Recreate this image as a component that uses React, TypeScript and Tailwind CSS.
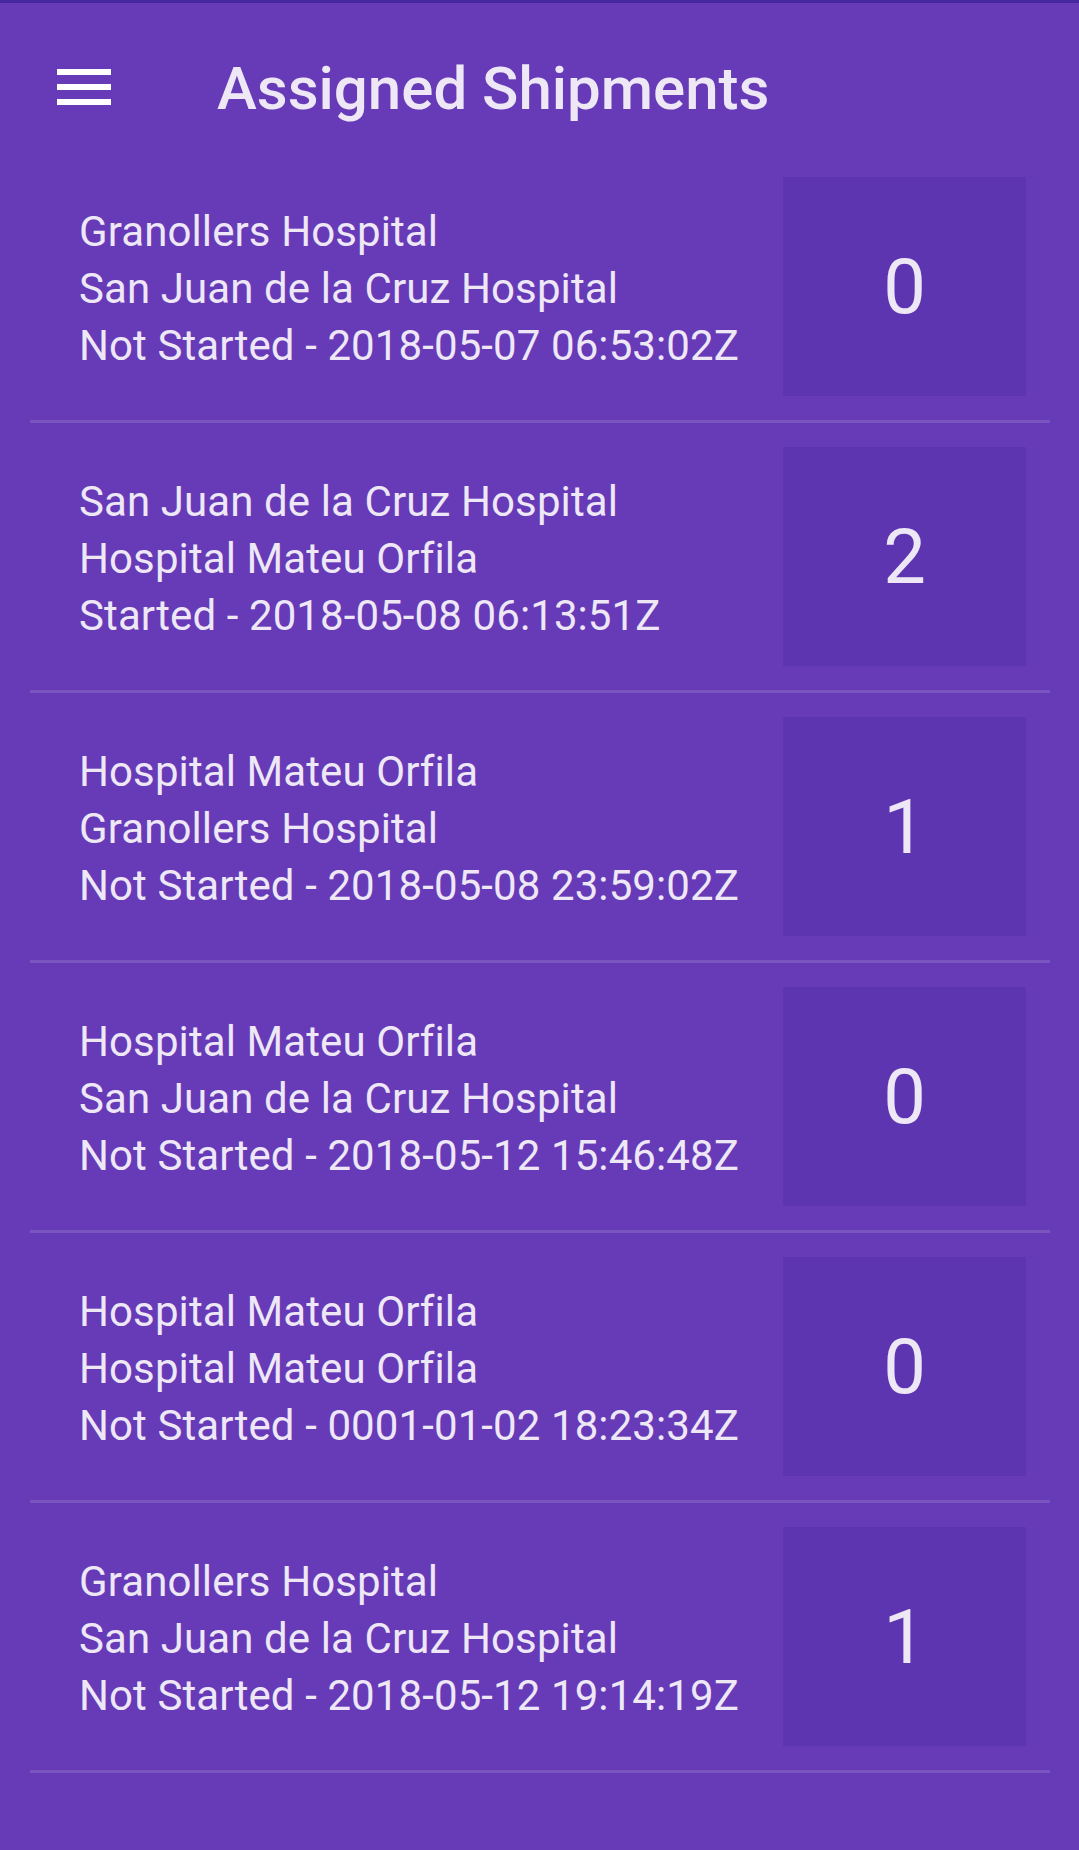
import { Menu } from 'lucide-react';

const shipments = [
  { from: 'Granollers Hospital', to: 'San Juan de la Cruz Hospital', status: 'Not Started - 2018-05-07 06:53:02Z', count: 0 },
  { from: 'San Juan de la Cruz Hospital', to: 'Hospital Mateu Orfila', status: 'Started - 2018-05-08 06:13:51Z', count: 2 },
  { from: 'Hospital Mateu Orfila', to: 'Granollers Hospital', status: 'Not Started - 2018-05-08 23:59:02Z', count: 1 },
  { from: 'Hospital Mateu Orfila', to: 'San Juan de la Cruz Hospital', status: 'Not Started - 2018-05-12 15:46:48Z', count: 0 },
  { from: 'Hospital Mateu Orfila', to: 'Hospital Mateu Orfila', status: 'Not Started - 0001-01-02 18:23:34Z', count: 0 },
  { from: 'Granollers Hospital', to: 'San Juan de la Cruz Hospital', status: 'Not Started - 2018-05-12 19:14:19Z', count: 1 },
];

export default function App() {
  return (
    <div
      className="min-h-[1850px] w-[1079px] bg-[#673ab7] border-t-[3px] border-[#4527a0] text-[#ede7f6]"
      style={{ fontFamily: 'Roboto, "Noto Sans", sans-serif' }}
    >
      {/* Header */}
      <header className="h-[150px] pt-[18px] flex items-center">
        <div className="w-[217px] pl-[57px] flex flex-col gap-[9px]">
          <span className="block w-[54px] h-[6px] bg-white" />
          <span className="block w-[54px] h-[6px] bg-white" />
          <span className="block w-[54px] h-[6px] bg-white" />
        </div>
        <h1 className="text-[60px] font-medium leading-none mt-[4px]">Assigned Shipments</h1>
      </header>

      {/* List */}
      <div className="px-[30px] pr-[29px]">
        {shipments.map((s, i) => (
          <div key={i} className="flex items-center py-[24px] border-b-[3px] border-[#7a55c0]">
            <div className="flex-1 pl-[49px] pt-[4px] text-[42px] leading-[57px] tracking-[0.1px]">
              <div>{s.from}</div>
              <div>{s.to}</div>
              <div>{s.status}</div>
            </div>
            <div className="w-[243px] h-[219px] mr-[24px] bg-[#5e35b1] flex items-center justify-center text-[76px] leading-none">
              {s.count}
            </div>
          </div>
        ))}
      </div>
    </div>
  );
}
